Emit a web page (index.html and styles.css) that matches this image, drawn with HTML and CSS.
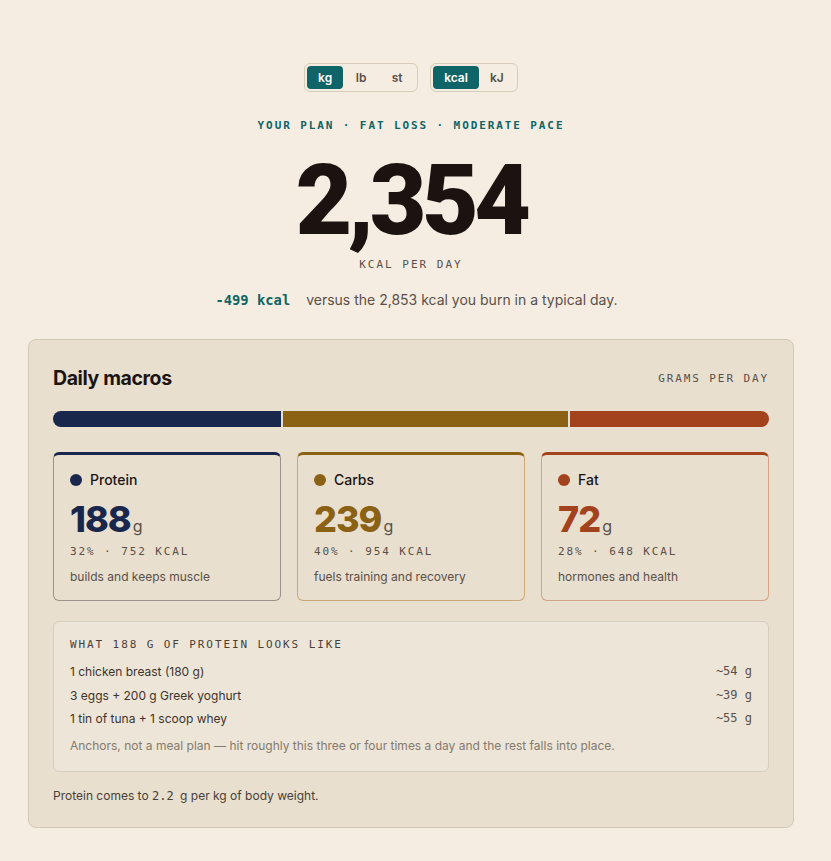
FILE: index.html
```html
<!DOCTYPE html>
<html lang="en">
<head>
<meta charset="utf-8">
<title>Your plan</title>
<link rel="stylesheet" href="styles.css">
</head>
<body>
<main class="page">
  <div class="toggles">
    <div class="seg">
      <button class="seg-btn is-on">kg</button>
      <button class="seg-btn">lb</button>
      <button class="seg-btn">st</button>
    </div>
    <div class="seg">
      <button class="seg-btn is-on">kcal</button>
      <button class="seg-btn">kJ</button>
    </div>
  </div>

  <p class="eyebrow">YOUR PLAN · FAT LOSS · MODERATE PACE</p>
  <h1 class="hero">2,354</h1>
  <p class="hero-unit">KCAL PER DAY</p>
  <p class="delta"><span class="delta-num">-499 kcal</span> versus the 2,853 kcal you burn in a typical day.</p>

  <section class="card">
    <div class="card-head">
      <h2 class="card-title">Daily macros</h2>
      <span class="card-meta">GRAMS PER DAY</span>
    </div>

    <div class="bar">
      <span class="bar-seg protein" style="flex-grow:32"></span>
      <span class="bar-seg carbs" style="flex-grow:40"></span>
      <span class="bar-seg fat" style="flex-grow:28"></span>
    </div>

    <div class="macros">
      <div class="macro m-protein">
        <div class="macro-label"><span class="dot"></span>Protein</div>
        <div class="macro-value"><span class="num">188</span><span class="unit">g</span></div>
        <div class="macro-meta">32% · 752 KCAL</div>
        <div class="macro-note">builds and keeps muscle</div>
      </div>
      <div class="macro m-carbs">
        <div class="macro-label"><span class="dot"></span>Carbs</div>
        <div class="macro-value"><span class="num">239</span><span class="unit">g</span></div>
        <div class="macro-meta">40% · 954 KCAL</div>
        <div class="macro-note">fuels training and recovery</div>
      </div>
      <div class="macro m-fat">
        <div class="macro-label"><span class="dot"></span>Fat</div>
        <div class="macro-value"><span class="num">72</span><span class="unit">g</span></div>
        <div class="macro-meta">28% · 648 KCAL</div>
        <div class="macro-note">hormones and health</div>
      </div>
    </div>

    <div class="examples">
      <p class="ex-title">WHAT 188 G OF PROTEIN LOOKS LIKE</p>
      <ul class="ex-list">
        <li class="ex-row"><span>1 chicken breast (180 g)</span><span class="ex-amt">~54 g</span></li>
        <li class="ex-row"><span>3 eggs + 200 g Greek yoghurt</span><span class="ex-amt">~39 g</span></li>
        <li class="ex-row"><span>1 tin of tuna + 1 scoop whey</span><span class="ex-amt">~55 g</span></li>
      </ul>
      <p class="ex-note">Anchors, not a meal plan — hit roughly this three or four times a day and the rest falls into place.</p>
    </div>

    <p class="foot">Protein comes to <span class="mono">2.2</span> g per kg of body weight.</p>
  </section>
</main>
</body>
</html>
```

FILE: styles.css
```css
html {
  background: #f5ede1;
}

body {
  margin: 0;
  background: #f5ede1;
  color: #1c1410;
  font-family: "Inter", "Liberation Sans", sans-serif;
}

.page {
  width: 766px;
  margin: 0 0 0 28px;
  padding: 63px 0 34px;
  display: flex;
  flex-direction: column;
  align-items: center;
}

.toggles {
  display: flex;
  gap: 12px;
}
.seg {
  display: flex;
  padding: 2px;
  border: 1px solid #d7ccba;
  border-radius: 6px;
}
.seg-btn {
  font-family: inherit;
  font-size: 12px;
  font-weight: 600;
  color: #5a5048;
  background: none;
  border: 0;
  border-radius: 4px;
  height: 23px;
  padding: 0 11px;
  min-width: 36px;
  cursor: pointer;
}
.seg-btn.is-on {
  background: #0e6466;
  color: #fff;
}

.eyebrow {
  margin: 27px 0 0;
  font-family: "DejaVu Sans Mono", monospace;
  font-size: 11px;
  line-height: 13px;
  font-weight: 700;
  letter-spacing: 1.9px;
  color: #0e6466;
}

.hero {
  margin: 11px 0 0;
  font-family: "Roboto", "Inter", sans-serif;
  font-size: 98px;
  line-height: 116px;
  font-weight: 900;
  letter-spacing: -4.5px;
  color: #1a1310;
}

.hero-unit {
  margin: -1px 0 0;
  font-family: "DejaVu Sans Mono", monospace;
  font-size: 11px;
  line-height: 13px;
  letter-spacing: 2px;
  color: #5a5048;
}

.delta {
  margin: 20px 0 0;
  padding-left: 11px;
  font-size: 14px;
  line-height: 17px;
  color: #5a5048;
}
.delta-num {
  font-family: "DejaVu Sans Mono", monospace;
  font-weight: 700;
  font-size: 13.8px;
  color: #0e6466;
  margin-right: 12px;
}

.card {
  align-self: stretch;
  margin-top: 30px;
  background: #e8dfcf;
  border: 1px solid #d3c8b6;
  border-radius: 8px;
  padding: 26px 24px 23px;
}
.card-head {
  display: flex;
  justify-content: space-between;
  align-items: center;
}
.card-title {
  margin: 0;
  font-size: 19.5px;
  line-height: 24px;
  font-weight: 700;
  letter-spacing: -0.4px;
  color: #1c1410;
}
.card-meta {
  font-family: "DejaVu Sans Mono", monospace;
  font-size: 11px;
  letter-spacing: 1.9px;
  color: #5a5048;
}

.bar {
  display: flex;
  gap: 2px;
  height: 16px;
  margin-top: 21px;
  border-radius: 8px;
  overflow: hidden;
}
.bar-seg { flex-basis: 0; }
.bar-seg.protein { background: #19274c; }
.bar-seg.carbs { background: #8b6214; }
.bar-seg.fat { background: #a3431e; }

.macros {
  display: grid;
  grid-template-columns: repeat(3, 1fr);
  gap: 16px;
  margin-top: 25px;
}
.macro {
  border: 1px solid #9a9288;
  border-top-width: 3px;
  border-radius: 6px;
  padding: 16px 16px 16px;
}
.m-protein { border-color: #9c948a; border-top-color: #19274c; --c: #19274c; }
.m-carbs { border-color: #cba878; border-top-color: #8b6214; --c: #8b6214; }
.m-fat { border-color: #d3a385; border-top-color: #a3431e; --c: #a3431e; }

.macro-label {
  display: flex;
  align-items: center;
  gap: 8px;
  font-size: 14px;
  line-height: 17px;
  font-weight: 500;
  color: #1c1410;
}
.dot {
  width: 12px;
  height: 12px;
  border-radius: 50%;
  background: var(--c);
}
.macro-value {
  margin-top: 8px;
  display: flex;
  align-items: baseline;
  gap: 2px;
}
.macro-value .num {
  font-size: 36px;
  line-height: 46px;
  font-weight: 800;
  letter-spacing: -1px;
  color: var(--c);
}
.macro-value .unit {
  font-size: 16px;
  color: #5a5048;
}
.macro-meta {
  margin-top: 3px;
  font-family: "DejaVu Sans Mono", monospace;
  font-size: 11px;
  line-height: 13px;
  letter-spacing: 1.9px;
  color: #5a5048;
}
.macro-note {
  margin-top: 11px;
  font-size: 12px;
  line-height: 15px;
  color: #5a5048;
}

.examples {
  margin-top: 20px;
  background: #ede5d7;
  border: 1px solid #d8cebe;
  border-radius: 6px;
  padding: 16px 16px 18px;
}
.ex-title {
  margin: 0;
  font-family: "DejaVu Sans Mono", monospace;
  font-size: 11px;
  line-height: 13px;
  letter-spacing: 1.9px;
  color: #4a4038;
}
.ex-list {
  list-style: none;
  margin: 9px 0 0;
  padding: 0;
}
.ex-row {
  display: flex;
  justify-content: space-between;
  font-size: 12px;
  line-height: 23.5px;
  color: #3d342d;
}
.ex-amt {
  font-family: "DejaVu Sans Mono", monospace;
  font-size: 12px;
  color: #5a5048;
}
.ex-note {
  margin: 7px 0 0;
  font-size: 12px;
  line-height: 15px;
  color: #857a6e;
}

.foot {
  margin: 16px 0 0;
  font-size: 12px;
  line-height: 15px;
  color: #4a4038;
}
.mono {
  font-family: "DejaVu Sans Mono", monospace;
  font-size: 12px;
  margin-right: 3px;
}
```
